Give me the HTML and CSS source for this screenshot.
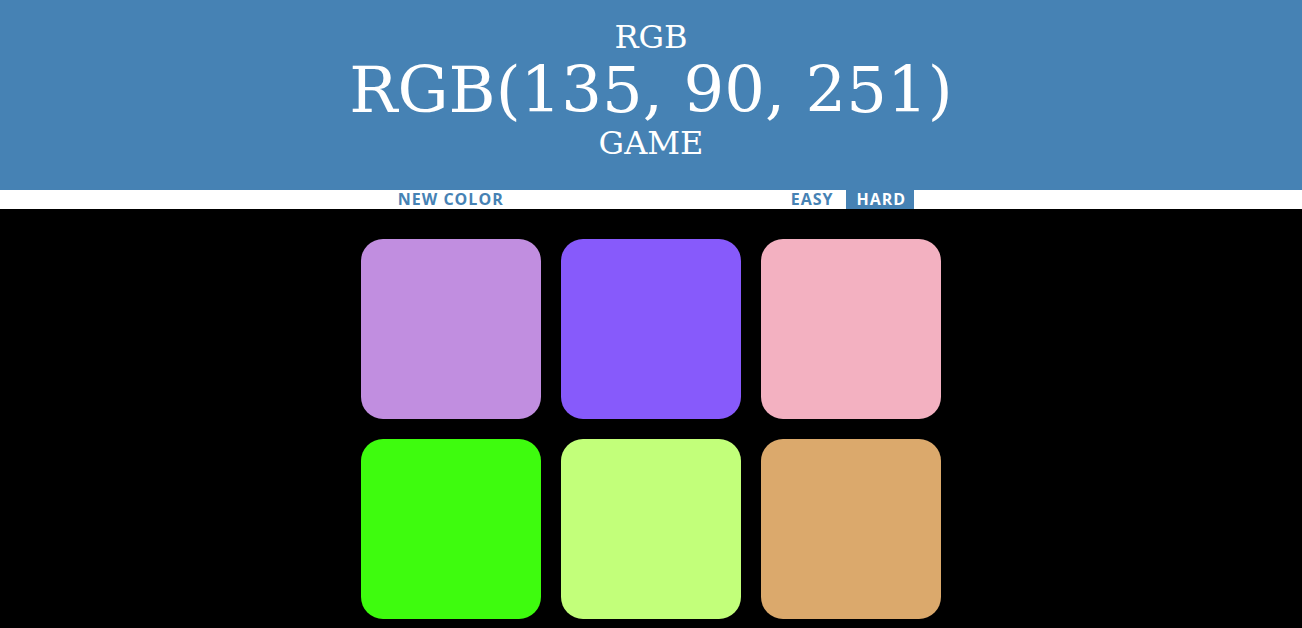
FILE: index.html
```html
<!DOCTYPE html>
<html>
<head>
<meta charset="utf-8">
<link rel="stylesheet" href="styles.css">
</head>
<body>
<h1 class="title">RGB<br><span class="color-display">RGB(135, 90, 251)</span><br>GAME</h1>
<div class="stripe">
  <button class="btn btn-reset">New Color</button>
  <span class="message"></span>
  <button class="btn">Easy</button>
  <button class="btn btn-selected">Hard</button>
</div>
<div class="board">
  <div class="square" style="background: rgb(193, 142, 224);"></div>
  <div class="square" style="background: rgb(135, 90, 251);"></div>
  <div class="square" style="background: rgb(243, 177, 193);"></div>
  <div class="square" style="background: rgb(62, 252, 14);"></div>
  <div class="square" style="background: rgb(194, 255, 122);"></div>
  <div class="square" style="background: rgb(219, 169, 108);"></div>
</div>
</body>
</html>
```
FILE: styles.css
```css
html, body {
  margin: 0;
  padding: 0;
}
body {
  background: #000;
  font-family: "DejaVu Serif", serif;
}
.title {
  margin: 0;
  padding: 20px 0 29px;
  background: #4682b4;
  color: #fff;
  text-align: center;
  font-weight: normal;
  font-size: 32px;
  line-height: 1.1;
  text-transform: uppercase;
}
.color-display {
  font-size: 200%;
}
.stripe {
  background: #fff;
  height: 19px;
  display: flex;
  justify-content: center;
  align-items: stretch;
}
.btn {
  border: none;
  background: none;
  margin: 0;
  padding: 0 8px 0 10px;
  height: 19px;
  font-family: "Open Sans", sans-serif;
  font-weight: 700;
  font-size: 16px;
  letter-spacing: 1px;
  text-transform: uppercase;
  color: #4682b4;
  line-height: 19px;
}
.message {
  width: 269px;
}
.btn-selected {
  background: #4682b4;
  color: #fff;
  margin-left: 5px;
}
.board {
  width: 600px;
  margin: 20px auto 0;
  display: flex;
  flex-wrap: wrap;
}
.square {
  width: 180px;
  height: 180px;
  margin: 10px;
  border-radius: 22px;
}
```
